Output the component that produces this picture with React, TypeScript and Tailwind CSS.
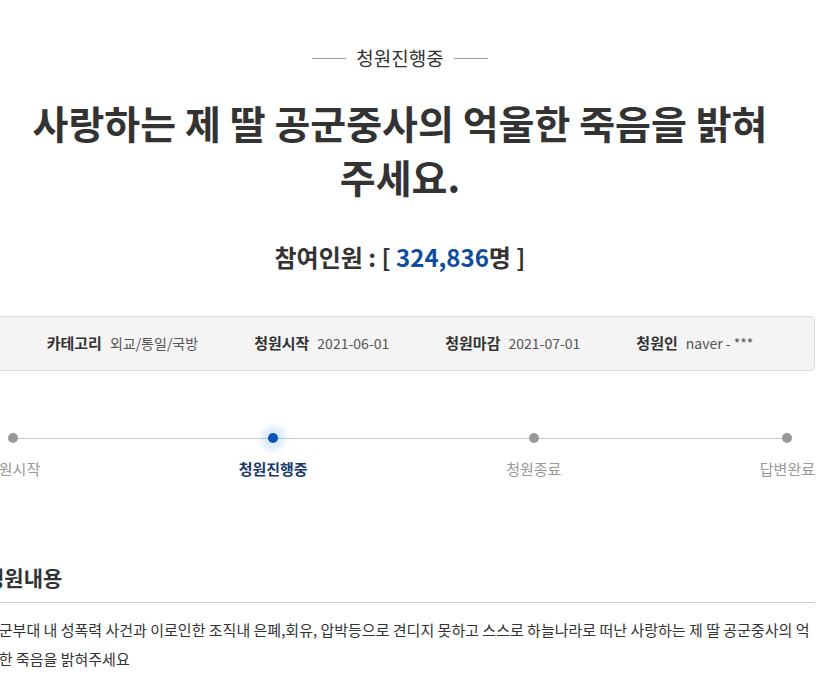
const steps = [
  { label: '청원시작', active: false },
  { label: '청원진행중', active: true },
  { label: '청원종료', active: false },
  { label: '답변완료', active: false },
]

const info = [
  { k: '카테고리', v: '외교/통일/국방' },
  { k: '청원시작', v: '2021-06-01' },
  { k: '청원마감', v: '2021-07-01' },
  { k: '청원인', v: 'naver - ***' },
]

export default function App() {
  return (
    <div className="w-[837px] h-[692px] overflow-hidden bg-white text-[#333]" style={{ fontFamily: '"Noto Sans CJK KR", "Noto Sans", sans-serif' }}>
      <div className="w-[830px] ml-[-15px]">
        <div className="pt-[44px] flex items-center justify-center gap-[10px] text-[19px] leading-[28px] text-[#333]">
          <span className="w-[34px] h-px bg-[#999]" />
          <span>청원진행중</span>
          <span className="w-[34px] h-px bg-[#999]" />
        </div>
        <h1 className="mt-[23px] px-[10px] break-keep text-center text-[39px] leading-[54px] font-bold text-[#333]">
          사랑하는 제 딸 공군중사의 억울한 죽음을 밝혀 주세요.
        </h1>
        <div className="mt-[36px] text-center text-[24px] leading-[36px] font-bold text-[#333]">
          참여인원 : [ <span className="text-[#0c4da2]">324,836</span>명 ]
        </div>
        <div className="mt-[41px] h-[55px] border border-[#ddd] rounded-[4px] bg-[#f4f4f4] flex items-center justify-center gap-[56px] text-[14px]">
          {info.map(i => (
            <div key={i.k} className="flex items-center gap-[8px]">
              <span className="font-bold text-[15px] text-[#333]">{i.k}</span>
              <span className="text-[#555]">{i.v}</span>
            </div>
          ))}
        </div>
        <div className="mt-[56px] relative flex justify-between">
          <div className="absolute top-[11px] left-[28px] right-[27px] h-px bg-[#c8c8c8]" />
          {steps.map(s => (
            <div key={s.label} className="relative flex flex-col items-center">
              <div className="h-[22px] flex items-center justify-center">
                {s.active ? (
                  <span className="w-[10px] h-[10px] rounded-full bg-[#0b56b3] shadow-[0_0_6px_7px_rgba(70,150,235,0.2)]" />
                ) : (
                  <span className="w-[10px] h-[10px] rounded-full bg-[#9a9a9a]" />
                )}
              </div>
              <span className={`mt-[9px] text-[15px] leading-[22px] ${s.active ? 'font-bold text-[#1b3a6b]' : 'text-[#999]'}`}>{s.label}</span>
            </div>
          ))}
        </div>
        <h2 className="mt-[82px] pb-[10px] border-b border-[#ccc] text-[21px] leading-[30px] font-bold text-[#333]">청원내용</h2>
        <p className="mt-[12px] text-[15px] leading-[29px] text-[#333]">
          공군부대 내 성폭력 사건과 이로인한 조직내 은폐,회유, 압박등으로 견디지 못하고 스스로 하늘나라로 떠난 사랑하는 제 딸 공군중사의 억울한 죽음을 밝혀주세요
        </p>
      </div>
    </div>
  )
}
